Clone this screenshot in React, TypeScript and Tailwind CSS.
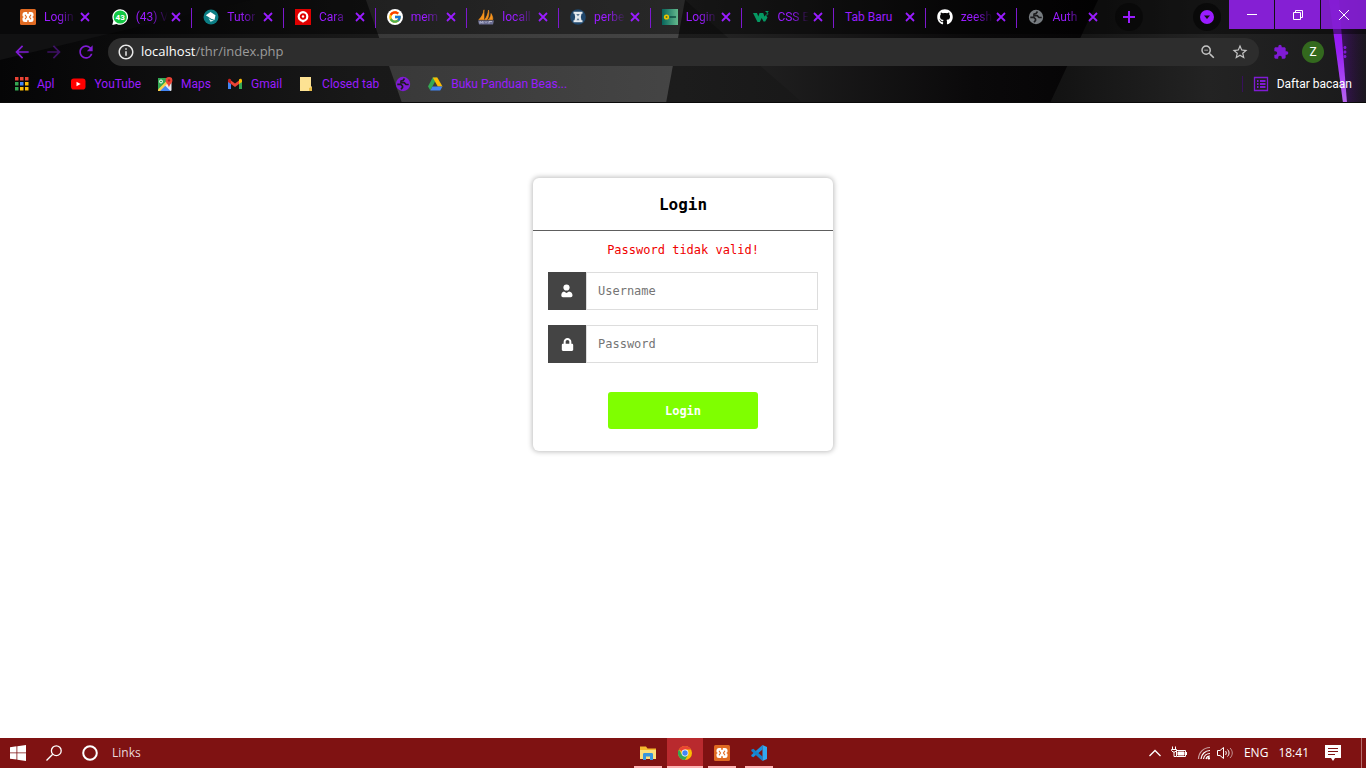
import React from 'react';
import type { ReactNode } from 'react';
import { FcGoogle } from 'react-icons/fc';
import { FaGithub, FaLock } from 'react-icons/fa';
import { MdArrowBack, MdArrowForward, MdRefresh, MdInfoOutline, MdStarBorder, MdExtension, MdMoreVert, MdZoomOut } from 'react-icons/md';

const XamppIcon = () => (
  <svg viewBox="0 0 16 16" className="size-4">
    <rect width="16" height="16" rx="1.5" fill="#e06a22" />
    <rect x="2.500" y="3" width="11" height="10" rx="2.500" fill="#fff" />
    <path d="M8 2.500v2.300M8 11.200v2.300M2 8h1.300M12.700 8H14" stroke="#e06a22" strokeWidth="1.600" />
    <path d="M5 5.800 6.500 8 5 10.200M11 5.800 9.500 8l1.500 2.200" fill="none" stroke="#e06a22" strokeWidth="1.100" />
  </svg>
);

const WhatsAppIcon = () => (
  <svg viewBox="0 0 16 16" className="size-4">
    <path d="M8.200.2a7.800 7.800 0 1 1-3.600 14.700L.3 15.900l1-4.200A7.800 7.800 0 0 1 8.200.2z" fill="#fff" />
    <circle cx="8.200" cy="8" r="6.600" fill="#12c843" />
    <text x="8.200" y="10.800" textAnchor="middle" fontSize="8" fontWeight="700" fill="#fff">43</text>
  </svg>
);

const TutorIcon = () => (
  <svg viewBox="0 0 16 16" className="size-4">
    <circle cx="8" cy="8" r="7.5" fill="#0b7d84" />
    <path d="M2.800 6.200 7.500 3l5 3.300-1 4.700-3.700-1.500z" fill="#fff" />
    <path d="m5.500 9 2.500 1.800 3 .7-3.500 1.300z" fill="#d5ecec" />
  </svg>
);

const CaraIcon = () => (
  <svg viewBox="0 0 16 16" className="size-4">
    <rect width="16" height="16" fill="#e00000" />
    <circle cx="8" cy="7.500" r="4.300" fill="none" stroke="#fff" strokeWidth="2.200" />
    <circle cx="8" cy="7.500" r="1.200" fill="#fff" />
    <path d="m6.500 12 1.500 2 1.500-2z" fill="#fff" />
  </svg>
);

const SailIcon = () => (
  <svg viewBox="0 0 16 16" className="size-4">
    <path d="M6 .8v10H.8C3.5 8 5.5 5 6 .8zM10.500 1c.8 3 .2 7-1.400 9.800H6.600C8.800 8 10 5 10.500 1zM13 4.500c1.600 2.500 2 4.500 1.700 6.300h-4.500C12 9 13 7 13 4.500z" fill="#f7941d" stroke="#f7941d" strokeWidth=".6" />
    <path d="M0 11.500h16l-1 4H1z" fill="#6c6f93" />
    <path d="M2 14.500v-2l1.500 1 1.500-1v2m2-2 1 1 1-1m2 2v-2h3" fill="none" stroke="#c9cbdd" strokeWidth=".8" />
  </svg>
);

const HourglassIcon = () => (
  <svg viewBox="0 0 16 16" className="size-4">
    <circle cx="8" cy="8" r="7.800" fill="#1f466b" />
    <path d="M3.500 2.800h9v2h-1L10.800 8l.7 3.200h1v2h-9v-2h1L5.200 8l-.7-3.200h-1z" fill="#e3e9ee" />
    <path d="M6.200 5h3.600L8 7.200zM8 9l1.500 2.200h-3z" fill="#5b7894" />
  </svg>
);

const BannerIcon = () => (
  <svg viewBox="0 0 16 16" className="size-4">
    <defs>
      <linearGradient id="banner"><stop stopColor="#07645b" /><stop offset="1" stopColor="#63b98c" /></linearGradient>
    </defs>
    <rect width="16" height="16" fill="url(#banner)" />
    <circle cx="4.500" cy="8" r="2.600" fill="#ecc400" />
    <circle cx="4.500" cy="8" r="1" fill="#4c7a28" />
    <path d="M7.500 8H14" stroke="#063d37" strokeWidth="1.300" />
  </svg>
);

const W3Icon = () => (
  <svg viewBox="0 0 16 16" className="size-4">
    <path d="M0 4h4l1.300 3.500L6.500 4h3.700l1.300 3.500L12.800 6l1.700 2.500-2.300 4h-1.700L8.700 9l-1.900 4H4.500z" fill="#059862" />
    <path d="M12.500 2.500h2.700L13.700 4c2 0 1.800 2.300-.9 1.900" fill="none" stroke="#059862" strokeWidth="1" />
  </svg>
);

const GlobeIcon = ({ className }: { className: string }) => (
  <svg viewBox="0 0 16 16" className={className}>
    <circle cx="8" cy="8" r="7.200" fill="currentColor" />
    <path d="M9.500 2.500 8 4.500 6 5v1.700h3.200L11 8.500h2.700M2.300 8.300h3.500L7.500 10v1.500L6 13.300" fill="none" stroke="#1c1c1e" strokeWidth="1.700" strokeLinejoin="round" />
  </svg>
);

const CrossIcon = () => (
  <svg viewBox="0 0 14 14" className="size-3.5" stroke="currentColor" strokeWidth="1.800"><path d="m3 3 8 8M11 3l-8 8" /></svg>
);

const ChromeIcon = () => (
  <svg viewBox="0 0 16 16" className="size-4">
    <g transform="translate(1 1) scale(.875)">
      <circle cx="8" cy="8" r="8" fill="#fbbc04" />
      <path d="M8 8 1.070 4A8 8 0 0 1 14.930 4H8z" fill="#ea4335" />
      <path d="M8 16A8 8 0 0 1 1.070 4L4.540 10 8 12l3.460-2z" fill="#34a853" />
      <circle cx="8" cy="8" r="3.900" fill="#fff" />
      <circle cx="8" cy="8" r="3.100" fill="#4285f4" />
    </g>
  </svg>
);

const ExplorerIcon = () => (
  <svg viewBox="0 0 16 16" className="size-4">
    <path d="M0 1.500h6L7.500 3.500H16V14H0z" fill="#f5b92e" />
    <path d="M0 5h16v9H0z" fill="#fde07c" />
    <path d="M3 15V9.500C3 8.500 3.500 8 4.500 8h7c1 0 1.500.500 1.500 1.500V15h-3v-3.500H6V15z" fill="#3a96dd" />
  </svg>
);

const CodeIcon = () => (
  <svg viewBox="0 0 16 16" className="size-4">
    <path d="M11.500 0 11.500 4.500 2.300 12.300.3 11.200V10z" fill="#1c8fdc" />
    <path d="M11.500 16v-4.500L2.300 3.700.3 4.800V6z" fill="#1583cc" />
    <path d="M11.500 0 16 1.900v12.200L11.500 16z" fill="#31a8f0" />
  </svg>
);

type TabInfo = { title: string; icon?: ReactNode };

const tabs: TabInfo[] = [
  { title: 'Login', icon: <XamppIcon /> },
  { title: '(43) V', icon: <WhatsAppIcon /> },
  { title: 'Tutor', icon: <TutorIcon /> },
  { title: 'Cara', icon: <CaraIcon /> },
  { title: 'mem', icon: <span className="flex size-4 items-center justify-center rounded-full bg-white"><FcGoogle className="size-3.5" /></span> },
  { title: 'locall', icon: <SailIcon /> },
  { title: 'perbe', icon: <HourglassIcon /> },
  { title: 'Login', icon: <BannerIcon /> },
  { title: 'CSS E', icon: <W3Icon /> },
  { title: 'Tab Baru' },
  { title: 'zeesh', icon: <FaGithub className="size-4 text-white" /> },
  { title: 'Auth', icon: <GlobeIcon className="size-4 text-[#777c80]" /> },
];

function Tab({ title, icon, first, last }: TabInfo & { first: boolean; last: boolean }) {
  return (
    <div className="relative flex h-[34px] min-w-0 flex-1 items-center justify-between pr-[9px] pl-[11px]">
      <button type="button" className="flex items-center gap-2 whitespace-nowrap">
        {icon}
        <span className={icon ? '[mask-image:linear-gradient(to_right,black_14px,transparent_32px)]' : ''}>{title}</span>
      </button>
      <button type="button" aria-label="Tutup tab" className="shrink-0"><CrossIcon /></button>
      {!first && !last && <span className="absolute top-2 right-0 h-5 w-px bg-[#7d19cf]" />}
    </div>
  );
}

function HeaderBackdrop() {
  return (
    <svg aria-hidden="true" preserveAspectRatio="none" viewBox="0 0 1366 103" className="absolute inset-0 size-full">
      <defs>
        <linearGradient id="base"><stop stopColor="#050506" /><stop offset=".27" stopColor="#191919" /><stop offset=".5" stopColor="#1c1c1c" /><stop offset="1" stopColor="#080708" /></linearGradient>
        <linearGradient id="facet"><stop stopColor="#383838" /><stop offset="1" stopColor="#454545" /></linearGradient>
        <linearGradient id="slab"><stop stopColor="#262626" /><stop offset=".7" stopColor="#0a090a" /><stop offset="1" stopColor="#050405" /></linearGradient>
        <linearGradient id="side"><stop stopColor="#121212" /><stop offset=".5" stopColor="#232323" /><stop offset="1" stopColor="#1a1a1b" /></linearGradient>
        <linearGradient id="glow"><stop stopColor="#6d0eb8" stopOpacity=".6" /><stop offset="1" stopColor="#2a0048" stopOpacity=".1" /></linearGradient>
        <linearGradient id="beam" x2="0" y2="1"><stop stopColor="#8f10f0" /><stop offset=".5" stopColor="#9820f5" /><stop offset="1" stopColor="#b766ee" /></linearGradient>
      </defs>
      <rect width="1366" height="103" fill="url(#base)" />
      <path d="M0 60 250 0H0z" fill="#111112" />
      <path d="M366 0h319l-19 103H402z" fill="url(#facet)" />
      <path d="M685 0 803 103h260L1100 0z" fill="url(#slab)" />
      <path d="M1098 0h268v103h-316z" fill="url(#side)" />
      <path d="M1334 0h32v103h-20z" fill="url(#glow)" />
      <path d="M1329 0h10l8 103h-4z" fill="url(#beam)" />
      <rect width="1366" height="34" fill="#000" fillOpacity=".42" />
      <rect y="102" width="1366" height="1" fill="#0a0a0a" />
    </svg>
  );
}

const bookmarks: TabInfo[] = [
  {
    title: 'Apl',
    icon: (
      <svg viewBox="0 0 16 16" className="size-4">
        <path d="M2 1h3.500v3.500H2zM7 1h3.500v3.500H7zM12 1h3.500v3.500H12z" fill="#ea4335" />
        <path d="M2 6h3.500v3.500H2zM2 11h3.500v3.500H2z" fill="#34a853" />
        <path d="M7 6h3.500v3.500H7z" fill="#4285f4" />
        <path d="M12 6h3.500v3.500H12zM7 11h3.500v3.500H7zM12 11h3.500v3.500H12z" fill="#fbbc04" />
      </svg>
    ),
  },
  {
    title: 'YouTube',
    icon: (
      <svg viewBox="0 0 16 16" className="size-4">
        <rect x="1" y="2.500" width="14.500" height="11" rx="2.800" fill="#f00" />
        <path d="m6.500 5.700 4.200 2.300-4.200 2.300z" fill="#fff" />
      </svg>
    ),
  },
  {
    title: 'Maps',
    icon: (
      <svg viewBox="0 0 16 16" className="size-4">
        <rect x="1" y="2" width="13.500" height="13" rx="1" fill="#e8eaed" />
        <path d="M1 2h9v4l-9 9z" fill="#34a853" />
        <path d="m2.500 15 5.500-5.500 5.500 5.500z" fill="#4285f4" />
        <path d="m1 13.500 9-9L12 6 3 15H1z" fill="#fbd14b" />
        <circle cx="4" cy="5.500" r="1.500" fill="none" stroke="#fff" />
        <path d="M12 1a3.400 3.400 0 0 1 3.400 3.400C15.400 7 12.500 8 12 11.500 11.500 8 8.600 7 8.600 4.400A3.400 3.400 0 0 1 12 1z" fill="#ea4335" />
        <circle cx="12" cy="4.400" r="1.200" fill="#9c2318" />
      </svg>
    ),
  },
  {
    title: 'Gmail',
    icon: (
      <svg viewBox="0 0 16 16" className="size-4">
        <path d="M1 4v9h3V7z" fill="#4285f4" />
        <path d="M15 4v9h-3V7z" fill="#34a853" />
        <path d="m4 4.500 4 3 4-3V8l-4 3-4-3z" fill="#ea4335" />
        <path d="M1 4.500C1 2.500 3 2.500 4 3.500V8L1 6z" fill="#c5221f" />
        <path d="M15 4.500c0-2-2-2-3-1V8l3-2z" fill="#fbbc04" />
      </svg>
    ),
  },
  {
    title: 'Closed tab',
    icon: (
      <svg viewBox="0 0 16 16" className="size-4">
        <path d="M2 1h11v9l1 1v4H2z" fill="#fde293" />
        <path d="M11 15v-3l3-1v4z" fill="#e9bd48" />
      </svg>
    ),
  },
  { title: '', icon: <GlobeIcon className="size-4 text-[#7f1bd4]" /> },
  {
    title: 'Buku Panduan Beas...',
    icon: (
      <svg viewBox="0 0 16 16" className="size-4">
        <path d="M5.700 1.500h4.600L3.300 14.300 1 10.500z" fill="#34a853" />
        <path d="M5.700 1.500h4.600l5.200 9h-4.700z" fill="#fbbc04" />
        <path d="M5.500 10.500h10l-2.300 4H3.200z" fill="#4285f4" />
      </svg>
    ),
  },
];

function Browser() {
  return (
    <header className="relative h-[103px] shrink-0 overflow-hidden font-[Roboto,'Noto_Sans',sans-serif] text-xs text-[#9a1cff]">
      <HeaderBackdrop />
      <div className="relative">
        <div className="flex h-[34px] items-start justify-between">
          <nav aria-label="Tab" className="flex min-w-0 flex-1 items-center pl-[9px]">
            <div className="flex max-w-[1100px] min-w-0 flex-1">
              {tabs.map((tab, i) => <Tab key={i} {...tab} first={i === 0} last={i === tabs.length - 1} />)}
            </div>
            <button type="button" aria-label="Tab baru" className="ml-1.5 flex size-7 shrink-0 items-center justify-center rounded-full bg-black/40">
              <svg viewBox="0 0 12 12" className="size-3" stroke="currentColor" strokeWidth="2"><path d="M6 0v12M0 6h12" /></svg>
            </button>
          </nav>
          <button type="button" aria-label="Telusuri tab" className="mt-[3px] mr-2 flex size-7 shrink-0 items-center justify-center rounded-full bg-black/50">
            <svg viewBox="0 0 14 14" className="size-3.5"><circle cx="7" cy="7" r="7" fill="currentColor" /><path d="M4 5.500h6L7 9z" fill="#111" /></svg>
          </button>
          <div className="flex shrink-0 gap-px text-white">
            <button type="button" aria-label="Minimalkan" className="flex h-[29px] w-[45px] items-center justify-center bg-[#851fd4]">
              <span className="h-px w-2.5 bg-white" />
            </button>
            <button type="button" aria-label="Pulihkan" className="flex h-[29px] w-[45px] items-center justify-center bg-[#851fd4]">
              <svg viewBox="0 0 10 10" className="size-2.5" fill="none" stroke="currentColor"><path d="M.5 2.500h7v7h-7zM2.500 2.500v-2h7v7h-2" /></svg>
            </button>
            <button type="button" aria-label="Tutup" className="flex h-[29px] w-[45px] items-center justify-center bg-[#8a1fdc]/90">
              <svg viewBox="0 0 10 10" className="size-2.5" fill="none" stroke="currentColor"><path d="m0 0 10 10M10 0 0 10" /></svg>
            </button>
          </div>
        </div>
        <div className="flex h-9 items-center pr-[5px] pl-1.5 text-[#7f1bd4]">
          <button type="button" aria-label="Kembali" className="flex w-8 justify-center"><MdArrowBack className="size-5" /></button>
          <button type="button" aria-label="Maju" className="flex w-8 justify-center opacity-45"><MdArrowForward className="size-5" /></button>
          <button type="button" aria-label="Muat ulang" className="flex w-8 justify-center"><MdRefresh className="size-5" /></button>
          <div className="relative mx-1.5 flex h-7 min-w-0 flex-1 items-center rounded-full bg-[#2d2d2d] pr-2.5 pl-[9px]">
            <MdInfoOutline className="size-[18px] text-[#e8e8e8]" />
            <label className="ml-1.5 flex-1 font-['Open_Sans',sans-serif] text-[13px] text-[#9b9b9b]">
              <input aria-label="Alamat" className="w-full bg-transparent text-transparent outline-none" />
              <span className="pointer-events-none absolute inset-y-0 left-[33px] flex items-center"><span className="text-white">localhost</span>/thr/index.php</span>
            </label>
            <button type="button" aria-label="Zoom" className="mr-3.5 text-[#c4c4c4]"><MdZoomOut className="size-[18px]" /></button>
            <button type="button" aria-label="Tandai halaman" className="text-[#c4c4c4]"><MdStarBorder className="size-[18px]" /></button>
          </div>
          <button type="button" aria-label="Ekstensi" className="flex w-8 justify-center"><MdExtension className="size-4" /></button>
          <button type="button" aria-label="Profil" className="flex w-8 justify-center"><span className="flex size-[22px] items-center justify-center rounded-full bg-[#33691e] text-xs text-white">Z</span></button>
          <button type="button" aria-label="Menu" className="flex w-8 justify-center"><MdMoreVert className="size-[18px]" /></button>
        </div>
        <div className="flex h-7 items-center justify-between pr-3.5 pl-[13px]">
          <nav aria-label="Bookmark" className="flex items-center gap-4">
            {bookmarks.map((b, i) => (
              <a key={i} href="#" aria-label={b.title || 'Bookmark'} className="flex items-center gap-2 whitespace-nowrap">
                {b.icon}
                {b.title && <span>{b.title}</span>}
              </a>
            ))}
          </nav>
          <button type="button" className="flex items-center gap-2 whitespace-nowrap text-white">
            <span className="mr-0.5 h-4 w-px bg-[#37105b]" />
            <svg viewBox="0 0 16 16" className="size-4 text-[#7f1bd4]" fill="none" stroke="currentColor"><path d="M1.500 1.500h13v13h-13z" strokeWidth="1.300" /><path d="M4 5h1.500M7 5h5.500M4 8h1.500M7 8h5.500M4 11h1.500M7 11h5.500" strokeWidth="1.800" /></svg>
            Daftar bacaan
          </button>
        </div>
      </div>
    </header>
  );
}

function Field({ label, type, icon }: { label: string; type: string; icon: ReactNode }) {
  return (
    <label className="mb-[15px] flex h-[38px]">
      <span className="flex w-[38px] shrink-0 items-center justify-center bg-[#444444] text-white">{icon}</span>
      <input type={type} placeholder={label} aria-label={label} className="min-w-0 flex-1 border border-[#dddddd] bg-white px-[11px] text-xs outline-none placeholder:text-[#757575]" />
    </label>
  );
}

function LoginCard() {
  return (
    <form onSubmit={(e) => e.preventDefault()} className="w-[300px] rounded-md bg-white font-['DejaVu_Sans_Mono',monospace] text-xs text-black shadow-[0_0_5px_1px_rgba(0,0,0,0.25)]">
      <h1 className="flex h-[53px] items-center justify-center border-b border-[#5e5e5e] pt-0.5 text-base font-bold">Login</h1>
      <div className="px-[15px] pb-[22px]">
        <p className="flex h-[41px] items-center justify-center pb-1 text-[#f00000]">Password tidak valid!</p>
        <Field label="Username" type="text" icon={
          <svg viewBox="0 0 12 14" className="h-3.5 w-3" fill="currentColor"><circle cx="5.500" cy="3.500" r="3.100" /><path d="M3 7.400 5.500 9 8 7.400c2.300.400 3.500 2 3.500 3.800 0 1.300-.700 2-1.800 2H2C.900 13.200.300 12.500.300 11.200.300 9.400 1.300 7.800 3 7.400z" /></svg>
        } />
        <Field label="Password" type="password" icon={<FaLock className="size-[13px]" />} />
        <button type="submit" className="mx-auto mt-[29px] block h-[37px] w-[150px] rounded-[3px] bg-[#7fff00] font-bold text-white">Login</button>
      </div>
    </form>
  );
}

function TaskButton({ label, active, children }: { label: string; active?: boolean; children: ReactNode }) {
  return (
    <button type="button" aria-label={label} className={active
      ? 'flex h-[30px] w-9 flex-col items-center justify-between border-b-2 border-[#ffb3b3] bg-[#b92a2e] pt-[7px]'
      : 'flex h-[30px] w-9 flex-col items-center justify-between pt-[7px]'}>
      {children}
      {!active && <span className="h-0.5 w-7 bg-[#ffb3b3]" />}
    </button>
  );
}

function Taskbar() {
  return (
    <footer className="grid h-[30px] shrink-0 grid-cols-[1fr_auto_1fr] items-center bg-[#7f1212] text-xs text-white">
      <div className="flex items-center gap-5 pl-2.5">
        <button type="button" aria-label="Mulai">
          <svg viewBox="0 0 16 16" className="size-4" fill="currentColor"><path d="M0 2.200 6.500 1.300v6.200H0zM7.300 1.200 16 0v7.500H7.300zM0 8.300h6.500v6.300L0 13.700zM7.300 8.300H16V16l-8.700-1.200z" /></svg>
        </button>
        <button type="button" aria-label="Telusuri">
          <svg viewBox="0 0 16 16" className="size-4" fill="none" stroke="currentColor" strokeWidth="1.300"><circle cx="10.300" cy="5.700" r="4.900" /><path d="M6.700 9.300.500 15.500" /></svg>
        </button>
        <button type="button" aria-label="Cortana">
          <svg viewBox="0 0 16 16" className="size-4" fill="none" stroke="currentColor" strokeWidth="2"><circle cx="8" cy="8" r="6.800" /></svg>
        </button>
        <span className="-ml-1.5 text-[#eadada]">Links</span>
      </div>
      <div className="flex gap-px pl-10">
        <TaskButton label="File Explorer"><ExplorerIcon /></TaskButton>
        <TaskButton label="Chrome" active><ChromeIcon /></TaskButton>
        <TaskButton label="XAMPP"><XamppIcon /></TaskButton>
        <TaskButton label="Visual Studio Code"><CodeIcon /></TaskButton>
      </div>
      <div className="flex items-center justify-end gap-2.5">
        <svg viewBox="0 0 12 8" className="h-2 w-3" fill="none" stroke="currentColor" strokeWidth="1.300"><path d="m.5 7 5.500-5.500L11.500 7" /></svg>
        <svg viewBox="0 0 16 14" className="h-3.5 w-4" fill="none" stroke="currentColor"><path d="M5.500 4.500h9v6h-9z" /><path d="M7 6h6v3H7z" fill="currentColor" /><path d="M15.500 6v3M1.500.500v3M4.500.500v3M.500 3.500h5v1L4 6H2L.500 4.500zM3 6v4.500h2" /></svg>
        <svg viewBox="0 0 14 14" className="size-3.5" fill="none" stroke="currentColor" strokeWidth="1.200"><path d="M1.500 13A11.500 11.500 0 0 1 13 1.500" strokeOpacity=".6" /><path d="M4 13a9 9 0 0 1 9-8.500M6.500 13A6.500 6.500 0 0 1 13 7.500M9 13a4 4 0 0 1 4-3" /><circle cx="11.800" cy="12.300" r="1.200" fill="currentColor" stroke="none" /></svg>
        <svg viewBox="0 0 17 14" className="-ml-1 h-3.5 w-[17px]" fill="none" stroke="currentColor"><path d="M.500 4.500h2.500L6.500 1.500v11L3 9.500H.500zM8.500 5c1 1 1 3 0 4M10.500 3.500c2 2 2 5 0 7" /><path d="M13 2c3 3 3 7 0 10" strokeOpacity=".55" /></svg>
        <span>ENG</span>
        <span>18:41</span>
        <svg viewBox="0 0 16 16" className="ml-1.5 size-4"><path d="M0 0h16v13H10l-2 3-2-3H0z" fill="#fff" /><path d="M3 3.500h10M3 6.500h10M3 9.500h7" stroke="#7f1212" /></svg>
        <span className="mr-1 ml-2.5 h-[30px] w-px bg-[#b56d6d]" />
      </div>
    </footer>
  );
}

export default function App() {
  return (
    <div className="flex min-h-screen flex-col bg-white font-['Open_Sans','Noto_Sans',sans-serif]">
      <Browser />
      <main className="flex flex-1 items-start justify-center pt-[75px]">
        <LoginCard />
      </main>
      <Taskbar />
    </div>
  );
}
